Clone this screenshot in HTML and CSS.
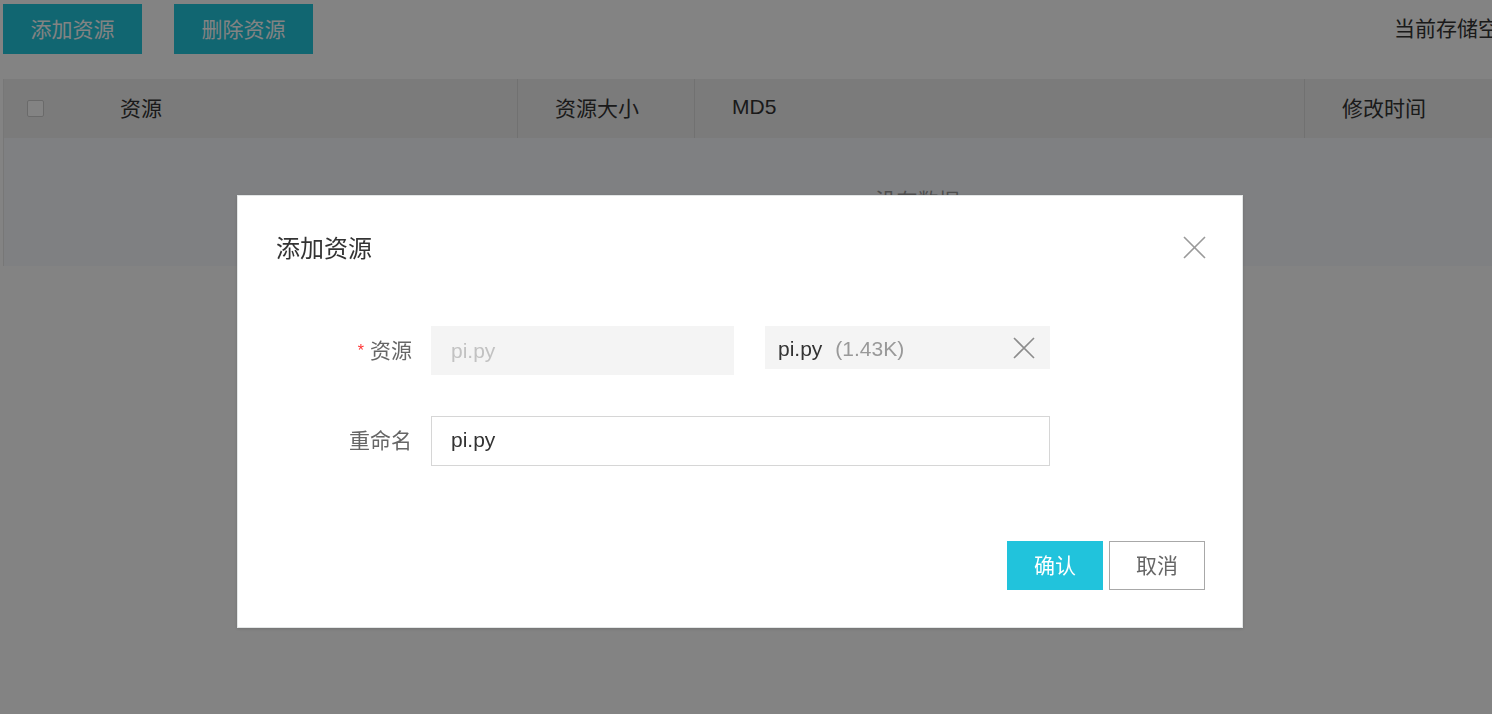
FILE: index.html
```html
<!DOCTYPE html>
<html lang="zh">
<head>
<meta charset="utf-8">
<title>添加资源</title>
<link rel="stylesheet" href="styles.css">
</head>
<body>
<div class="page">
  <div class="toolbar">
    <button class="btn-primary">添加资源</button>
    <button class="btn-primary">删除资源</button>
    <span class="storage">当前存储空间：0 B</span>
  </div>
  <div class="table">
    <div class="thead">
      <div class="th th-name"><span class="checkbox"></span><span class="th-label">资源</span></div>
      <div class="th">资源大小</div>
      <div class="th">MD5</div>
      <div class="th">修改时间</div>
    </div>
    <div class="tbody"><span class="empty">没有数据</span></div>
  </div>
</div>

<div class="mask"></div>

<div class="modal">
  <div class="modal-header">
    <h2 class="modal-title">添加资源</h2>
    <span class="modal-close">
      <svg width="23" height="23" viewBox="0 0 23 23"><path d="M1 1L22 22M22 1L1 22" stroke="#9a9a9a" stroke-width="1.6" fill="none"/></svg>
    </span>
  </div>
  <div class="modal-body">
    <div class="form-row">
      <label class="form-label"><span class="req">*</span>资源</label>
      <div class="input input-disabled">pi.py</div>
      <div class="file-chip">
        <span class="file-name">pi.py</span>
        <span class="file-size">(1.43K)</span>
        <svg class="chip-x" width="22" height="22" viewBox="0 0 22 22"><path d="M1 1L21 21M21 1L1 21" stroke="#8c8c8c" stroke-width="1.6" fill="none"/></svg>
      </div>
    </div>
    <div class="form-row">
      <label class="form-label">重命名</label>
      <div class="input input-wide">pi.py</div>
    </div>
  </div>
  <div class="modal-footer">
    <button class="btn-ok">确认</button>
    <button class="btn-cancel">取消</button>
  </div>
</div>
</body>
</html>
```

FILE: styles.css
```css
html, body {
  margin: 0;
  padding: 0;
  overflow: hidden;
  background: #fff;
}
body {
  font-family: "Liberation Sans", "Noto Sans CJK SC", sans-serif;
  color: #333;
  width: 1492px;
  height: 714px;
}
.page {
  width: 1700px;
  padding: 4px 0 0 3px;
}
.toolbar {
  display: flex;
  align-items: center;
  gap: 32px;
  height: 50px;
}
.btn-primary {
  width: 139px;
  height: 50px;
  border: none;
  background: #21c6dc;
  color: #fff;
  font-family: inherit;
  font-size: 21px;
  padding: 0 0 3px;
}
.storage {
  margin-left: 1049px;
  font-size: 21px;
  color: #333;
  white-space: nowrap;
  padding-bottom: 4px;
}
.table {
  margin-top: 25px;
  border-left: 1px solid #e8e8e8;
}
.thead {
  display: grid;
  grid-template-columns: 513px 177px 610px 400px;
  height: 59px;
  background: #efefef;
}
.th {
  display: flex;
  align-items: center;
  padding-left: 37px;
  padding-bottom: 3px;
  font-size: 21px;
  color: #333;
  border-left: 1px solid #dcdcdc;
}
.th-name {
  border-left: none;
  padding-left: 23px;
  padding-bottom: 0;
}
.th-name .th-label {
  margin-bottom: 3px;
}
.checkbox {
  width: 15px;
  height: 15px;
  border: 1px solid #cfcfcf;
  background: #fff;
  border-radius: 2px;
}
.th-label {
  margin-left: 76px;
}
.tbody {
  height: 128px;
  background: #f8f9fd;
  display: flex;
  justify-content: center;
  padding-top: 46px;
  box-sizing: border-box;
  padding-left: 128px;
}
.empty {
  font-size: 21px;
  color: #999;
}
.mask {
  position: fixed;
  inset: 0;
  background: rgba(0, 0, 0, 0.485);
}
.modal {
  position: fixed;
  left: 237px;
  top: 195px;
  width: 1006px;
  height: 433px;
  box-sizing: border-box;
  background: #fff;
  border: 1px solid #e3e6e6;
  box-shadow: 0 1px 3px rgba(0, 0, 0, 0.15);
  display: flex;
  flex-direction: column;
}
.modal-header {
  display: flex;
  align-items: center;
  justify-content: space-between;
  padding: 38px 36px 0 38px;
  height: 30px;
}
.modal-title {
  margin: 0;
  font-size: 24px;
  font-weight: normal;
  color: #333;
  line-height: 30px;
}
.modal-close {
  display: flex;
  margin-top: -4px;
}
.modal-body {
  display: flex;
  flex-direction: column;
  gap: 40px;
  padding-top: 62px;
}
.form-row {
  display: flex;
  align-items: flex-start;
}
.form-label {
  width: 174px;
  text-align: right;
  font-size: 21px;
  color: #666;
  line-height: 50px;
  margin-right: 19px;
}
.req {
  color: #f33;
  font-size: 16px;
  margin-right: 6px;
  vertical-align: 2px;
}
.input {
  height: 50px;
  box-sizing: border-box;
  line-height: 46px;
  padding-left: 19px;
  font-size: 21px;
  border: 1px solid #d6d6d6;
  color: #333;
}
.input-disabled {
  width: 303px;
  height: 49px;
  line-height: 48px;
  border-color: #f4f4f4;
  background: #f4f4f4;
  color: #c2c2c2;
}
.input-wide {
  width: 619px;
}
.file-chip {
  margin-left: 31px;
  width: 285px;
  height: 43px;
  box-sizing: border-box;
  background: #f4f4f4;
  display: flex;
  align-items: center;
  padding: 2px 15px 0 13px;
  font-size: 21px;
}
.file-name {
  color: #333;
}
.file-size {
  color: #999;
  margin-left: 13px;
}
.chip-x {
  margin-left: auto;
  margin-top: -2px;
}
.modal-footer {
  margin-top: auto;
  display: flex;
  justify-content: flex-end;
  gap: 6px;
  padding: 0 37px 37px 0;
}
.btn-ok, .btn-cancel {
  width: 96px;
  height: 49px;
  font-family: inherit;
  font-size: 21px;
  padding: 0 0 3px;
  box-sizing: border-box;
}
.btn-ok {
  background: #21c3dc;
  color: #fff;
  border: none;
}
.btn-cancel {
  background: #fff;
  color: #666;
  border: 1px solid #a8a8a8;
}
```
